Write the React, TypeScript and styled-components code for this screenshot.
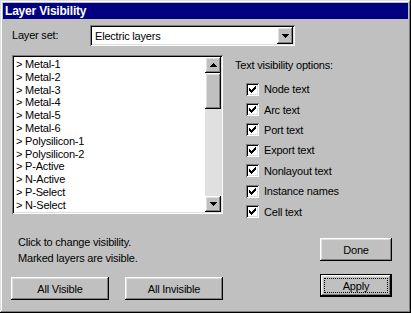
import React from 'react';
import styled, { createGlobalStyle } from 'styled-components';

const GlobalStyle = createGlobalStyle`
  body {
    margin: 0;
    background: #c0c0c0;
    font-family: "Liberation Sans", Arial, sans-serif;
    font-size: 11px;
    letter-spacing: -0.2px;
    color: #000;
  }
`;

const raised = `
  background: #c0c0c0;
  box-shadow: inset -1px -1px #000, inset 1px 1px #fff, inset -2px -2px #808080, inset 2px 2px #dfdfdf;
`;
const sunken = `
  box-shadow: inset 1px 1px #808080, inset -1px -1px #fff, inset 2px 2px #000, inset -2px -2px #dfdfdf;
`;

const Window = styled.div`
  width: 411px;
  height: 313px;
  box-sizing: border-box;
  padding: 3px;
  background: #c0c0c0;
  box-shadow: inset -1px -1px #000, inset 1px 1px #dfdfdf, inset -2px -2px #808080, inset 2px 2px #fff;
  display: flex;
  flex-direction: column;
`;

const TitleBar = styled.div`
  height: 16px;
  background: #000080;
  color: #fff;
  display: flex;
  align-items: center;
  padding-left: 2px;
  font-weight: bold;
  font-size: 12px;
`;

const Body = styled.div`
  flex: 1;
  display: flex;
  flex-direction: column;
  padding: 6px 16px 0 9px;
`;

const SetRow = styled.div`
  display: flex;
  align-items: center;
  height: 21px;
`;

const SetLabel = styled.span`
  width: 78px;
  margin-top: -2px;
`;

const Combo = styled.div`
  ${sunken}
  width: 205px;
  height: 21px;
  box-sizing: border-box;
  padding: 2px;
  background: #fff;
  display: flex;
  align-items: center;
`;

const ComboText = styled.span`
  flex: 1;
  padding-left: 3px;
`;

const ArrowButton = styled.div<{ $h?: number }>`
  ${raised}
  width: 16px;
  height: ${(p) => p.$h ?? 16}px;
  flex: none;
  display: flex;
  align-items: center;
  justify-content: center;
`;

const Main = styled.div`
  display: flex;
  gap: 12px;
  height: 159px;
  margin-top: 9px;
`;

const ListBox = styled.div`
  ${sunken}
  width: 211px;
  height: 159px;
  box-sizing: border-box;
  padding: 2px;
  background: #fff;
  display: flex;
`;

const Items = styled.div`
  flex: 1;
  padding: 1px 0 0 2px;
  overflow: hidden;
`;

const Item = styled.div`
  height: 12.8px;
  line-height: 13px;
  white-space: nowrap;
`;

const ScrollBar = styled.div`
  width: 16px;
  display: flex;
  flex-direction: column;
  background: #e0e0e0;
`;

const Thumb = styled.div`
  ${raised}
  height: 36px;
`;

const Track = styled.div`
  flex: 1;
`;

const Options = styled.div`
  display: flex;
  flex-direction: column;
  padding-top: 2px;
`;

const Heading = styled.div`
  line-height: 16px;
  margin-bottom: 6px;
`;

const CheckRow = styled.label`
  display: flex;
  align-items: center;
  gap: 5px;
  height: 20.4px;
  flex: none;
  padding-left: 11px;
`;

const Box = styled.span`
  ${sunken}
  width: 13px;
  height: 13px;
  background: #fff;
  display: flex;
`;

const Footer = styled.div`
  display: flex;
`;

const FooterLeft = styled.div`
  padding-top: 20px;
  display: flex;
  flex-direction: column;
`;

const Info = styled.div`
  line-height: 16px;
  padding-left: 6px;
`;

const ButtonRow = styled.div`
  display: flex;
  gap: 16px;
  margin: 11px 0 0 -1px;
`;

const FooterRight = styled.div`
  margin-left: auto;
  padding-top: 24px;
  display: flex;
  flex-direction: column;
  gap: 13px;
`;

const Button = styled.button<{ $w: number; $default?: boolean }>`
  ${raised}
  position: relative;
  width: ${(p) => p.$w}px;
  height: 23px;
  border: none;
  padding: 0;
  font: inherit;
  letter-spacing: inherit;
  color: #000;
  ${(p) =>
    p.$default &&
    `
    box-shadow: inset 0 0 0 1px #000, inset -2px -2px #000, inset 2px 2px #fff,
      inset -3px -3px #808080, inset 3px 3px #dfdfdf;
    &::after {
      content: '';
      position: absolute;
      inset: 4px;
      border: 1px dotted #000;
    }
  `}
`;

const Arrow = ({ up }: { up?: boolean }) => (
  <svg width="7" height="4" viewBox="0 0 7 4" shapeRendering="crispEdges">
    <polygon points={up ? '3.5,0 7,4 0,4' : '0,0 7,0 3.5,4'} fill="#000" />
  </svg>
);

const Check = () => (
  <svg width="9" height="9" viewBox="0 0 9 9" shapeRendering="crispEdges" style={{ margin: '2px' }}>
    <g fill="#000">
      <rect x="1" y="3" width="1" height="3" />
      <rect x="2" y="4" width="1" height="3" />
      <rect x="3" y="5" width="1" height="3" />
      <rect x="4" y="4" width="1" height="3" />
      <rect x="5" y="3" width="1" height="3" />
      <rect x="6" y="2" width="1" height="3" />
      <rect x="7" y="1" width="1" height="3" />
    </g>
  </svg>
);

const layers = [
  'Metal-1', 'Metal-2', 'Metal-3', 'Metal-4', 'Metal-5', 'Metal-6',
  'Polysilicon-1', 'Polysilicon-2', 'P-Active', 'N-Active', 'P-Select', 'N-Select',
];

const textOptions = [
  'Node text', 'Arc text', 'Port text', 'Export text',
  'Nonlayout text', 'Instance names', 'Cell text',
];

const App: React.FC = () => {
  return (
    <>
      <GlobalStyle />
      <Window>
        <TitleBar>Layer Visibility</TitleBar>
        <Body>
          <SetRow>
            <SetLabel>Layer set:</SetLabel>
            <Combo>
              <ComboText>Electric layers</ComboText>
              <ArrowButton $h={17}>
                <Arrow />
              </ArrowButton>
            </Combo>
          </SetRow>
          <Main>
            <ListBox>
              <Items>
                {layers.map((l) => (
                  <Item key={l}>&gt; {l}</Item>
                ))}
              </Items>
              <ScrollBar>
                <ArrowButton>
                  <Arrow up />
                </ArrowButton>
                <Thumb />
                <Track />
                <ArrowButton>
                  <Arrow />
                </ArrowButton>
              </ScrollBar>
            </ListBox>
            <Options>
              <Heading>Text visibility options:</Heading>
              {textOptions.map((t) => (
                <CheckRow key={t}>
                  <Box>
                    <Check />
                  </Box>
                  {t}
                </CheckRow>
              ))}
            </Options>
          </Main>
          <Footer>
            <FooterLeft>
              <Info>Click to change visibility.</Info>
              <Info>Marked layers are visible.</Info>
              <ButtonRow>
                <Button $w={98}>All Visible</Button>
                <Button $w={98}>All Invisible</Button>
              </ButtonRow>
            </FooterLeft>
            <FooterRight>
              <Button $w={72}>Done</Button>
              <Button $w={72} $default>
                Apply
              </Button>
            </FooterRight>
          </Footer>
        </Body>
      </Window>
    </>
  );
};

export default App;
